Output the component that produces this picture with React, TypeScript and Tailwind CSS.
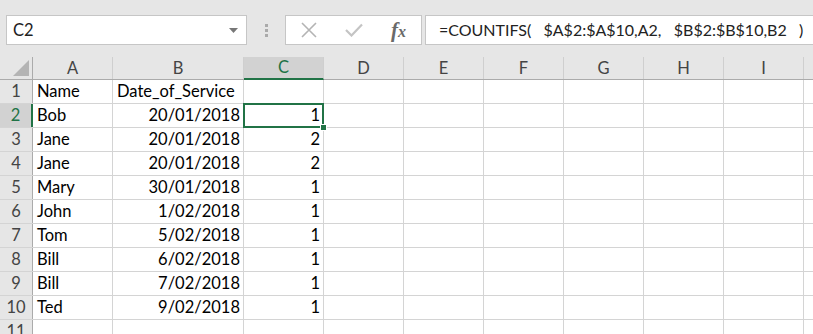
const COLS = ['A', 'B', 'C', 'D', 'E', 'F', 'G', 'H', 'I', ''];
const WIDTHS = ['w-[80px]', 'w-[131px]', 'w-[80px]', 'w-[80px]', 'w-[80px]', 'w-[80px]', 'w-[80px]', 'w-[80px]', 'w-[80px]', 'flex-1'];

const ROWS: [string, string, string][] = [
  ['Name', 'Date_of_Service', ''],
  ['Bob', '20/01/2018', '1'],
  ['Jane', '20/01/2018', '2'],
  ['Jane', '20/01/2018', '2'],
  ['Mary', '30/01/2018', '1'],
  ['John', '1/02/2018', '1'],
  ['Tom', '5/02/2018', '1'],
  ['Bill', '6/02/2018', '1'],
  ['Bill', '7/02/2018', '1'],
  ['Ted', '9/02/2018', '1'],
  ['', '', ''],
];

const FONT = "font-['Lato','Open_Sans',sans-serif]";

function FormulaBar() {
  return (
    <div className="h-[57px] bg-[#e6e6e6] flex items-start pt-[15px] pl-[6px]">
      <div className="w-[241px] h-[30px] bg-white border border-[#c6c6c6] flex items-center justify-between pl-[6px] pr-[8px]">
        <span className="text-[16.5px] text-[#222]">C2</span>
        <svg width="9" height="5" viewBox="0 0 9 5">
          <path d="M0 0 L9 0 L4.5 5 Z" fill="#777" />
        </svg>
      </div>
      <div className="w-[38px] h-[30px] flex flex-col items-center justify-center gap-[2px]">
        <span className="w-[3px] h-[3px] bg-[#aaa]" />
        <span className="w-[3px] h-[3px] bg-[#aaa]" />
        <span className="w-[3px] h-[3px] bg-[#aaa]" />
      </div>
      <div className="w-[137px] h-[30px] bg-white border border-[#c6c6c6] flex items-center">
        <div className="w-[46px] flex justify-center">
          <svg width="16" height="16" viewBox="0 0 16 16">
            <path d="M1 1 L15 15 M15 1 L1 15" stroke="#b4b4b4" strokeWidth="1.6" />
          </svg>
        </div>
        <div className="w-[44px] flex justify-center">
          <svg width="18" height="14" viewBox="0 0 18 14">
            <path d="M1 7 L6.5 12.5 L17 1.5" stroke="#c4c4c4" strokeWidth="2.2" fill="none" />
          </svg>
        </div>
        <div className="w-[45px] flex justify-center">
          <span className="font-['Liberation_Serif',serif] italic font-bold text-[21px] text-[#6a6a6a] leading-none">
            f<span className="text-[16px]">x</span>
          </span>
        </div>
      </div>
      <div className="ml-[3px] flex-1 h-[30px] bg-white border-y border-l border-[#c6c6c6] flex items-center pl-[13px]">
        <span className="text-[16px] text-[#222] whitespace-pre">
          =COUNTIFS(   $A$2:$A$10,A2,   $B$2:$B$10,B2   )
        </span>
      </div>
    </div>
  );
}

function HeaderRow() {
  return (
    <div className="flex h-[23px] bg-[#e6e6e6] border-b border-[#ababab]">
      <div className="w-[33px] shrink-0 border-r border-[#ababab] relative">
        <svg className="absolute right-[3px] bottom-[3px]" width="16" height="16" viewBox="0 0 16 16">
          <path d="M16 0 L16 16 L0 16 Z" fill="#b4b4b4" />
        </svg>
      </div>
      {COLS.map((c, i) => {
        const sel = c === 'C';
        return (
          <div
            key={i}
            className={`${WIDTHS[i]} shrink-0 flex items-center justify-center text-[16.5px] ${i < COLS.length - 1 ? 'border-r border-[#cfcfcf]' : ''} ${sel ? 'bg-[#d2d2d2] text-[#217346] border-b-2 border-b-[#217346] -mb-px' : 'text-[#444]'}`}
          >
            {c}
          </div>
        );
      })}
    </div>
  );
}

function DataRow({ n, row }: { n: number; row: [string, string, string] }) {
  const sel = n === 2;
  return (
    <div className="flex h-[24px] border-b border-[#d4d4d4]">
      <div
        className={`w-[33px] shrink-0 flex items-center justify-center text-[16.5px] ${sel ? 'bg-[#d2d2d2] text-[#217346] border-r-2 border-[#217346]' : 'bg-[#e6e6e6] text-[#444] border-r border-[#ababab]'}`}
      >
        {n}
      </div>
      {COLS.map((_, i) => {
        let content = '';
        let align = 'justify-start pl-[4px]';
        if (i === 0) content = row[0];
        if (i === 1) {
          content = row[1];
          align = n === 1 ? 'justify-start pl-[4px]' : 'justify-end pr-[3px]';
        }
        if (i === 2) {
          content = row[2];
          align = 'justify-end pr-[3px]';
        }
        return (
          <div
            key={i}
            className={`${WIDTHS[i]} shrink-0 relative flex items-center text-[16.5px] text-black ${align} ${i < COLS.length - 1 ? 'border-r border-[#d4d4d4]' : ''}`}
          >
            {content}
            {sel && i === 2 && (
              <>
                <div className="absolute z-10 -left-px -top-px -right-px -bottom-px border-2 border-[#217346]" />
                <div className="absolute z-10 -right-[4px] -bottom-[4px] w-[7px] h-[7px] bg-[#217346] border border-white" />
              </>
            )}
          </div>
        );
      })}
    </div>
  );
}

export default function App() {
  return (
    <div className={`w-[813px] h-[334px] overflow-hidden bg-white ${FONT}`}>
      <FormulaBar />
      <HeaderRow />
      {ROWS.map((r, i) => (
        <DataRow key={i} n={i + 1} row={r} />
      ))}
    </div>
  );
}
